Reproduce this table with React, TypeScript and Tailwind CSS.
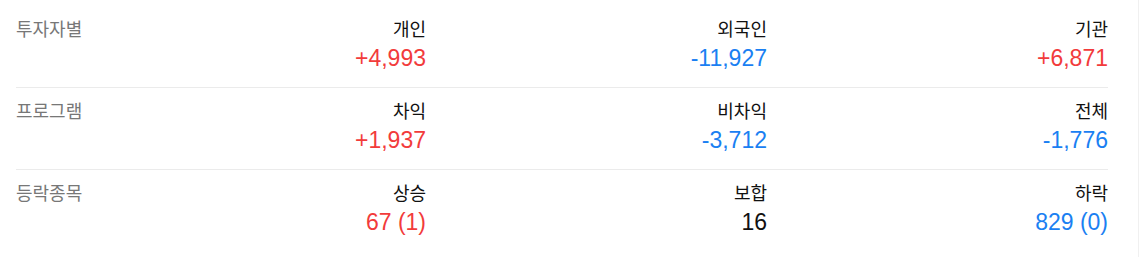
const rows = [
  {
    label: "투자자별",
    cols: [
      { name: "개인", value: "+4,993", tone: "up" },
      { name: "외국인", value: "-11,927", tone: "down" },
      { name: "기관", value: "+6,871", tone: "up" },
    ],
  },
  {
    label: "프로그램",
    cols: [
      { name: "차익", value: "+1,937", tone: "up" },
      { name: "비차익", value: "-3,712", tone: "down" },
      { name: "전체", value: "-1,776", tone: "down" },
    ],
  },
  {
    label: "등락종목",
    cols: [
      { name: "상승", value: "67 (1)", tone: "up" },
      { name: "보합", value: "16", tone: "flat" },
      { name: "하락", value: "829 (0)", tone: "down" },
    ],
  },
];

const toneClass: Record<string, string> = {
  up: "text-[#f23b3b]",
  down: "text-[#1a80f2]",
  flat: "text-[#111]",
};

export default function App() {
  return (
    <div
      className="w-[1139px] h-[257px] bg-white border-r border-[#f0f0f0] pl-4 pr-[30px] pt-[6px]"
      style={{ fontFamily: '"Liberation Sans", Arial, "Noto Sans CJK KR", sans-serif' }}
    >
      {rows.map((r, i) => (
        <div
          key={r.label}
          className={`flex h-[82px] pt-[12px] ${i < rows.length - 1 ? "border-b border-[#ebebeb]" : ""}`}
        >
          <div className="w-[69px] text-[18px] leading-[24px] text-[#777]">{r.label}</div>
          {r.cols.map((c) => (
            <div key={c.name} className="flex-1 flex flex-col items-end">
              <span className="text-[18px] leading-[24px] text-[#111]">{c.name}</span>
              <span className={`text-[23px] leading-[32px] ${toneClass[c.tone]}`}>{c.value}</span>
            </div>
          ))}
        </div>
      ))}
    </div>
  );
}
